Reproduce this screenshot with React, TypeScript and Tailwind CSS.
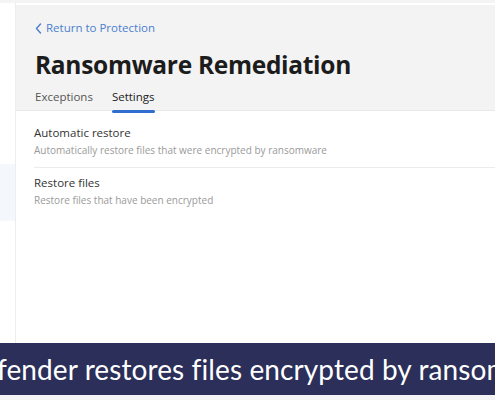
import React from 'react';

const font = { fontFamily: '"Open Sans", "Noto Sans", sans-serif' };

function SettingRow({ title, desc, className }: { title: string; desc: string; className: string }) {
  return (
    <div className={className}>
      <div className="text-[11.5px] leading-[16px] text-[#333]">{title}</div>
      <div className="mt-[2px] text-[10px] leading-[14px] text-[#9a9a9a]">{desc}</div>
    </div>
  );
}

export default function App() {
  return (
    <div className="w-[495px] h-[400px] bg-white overflow-hidden flex flex-col" style={font}>
      <div className="h-[343px] flex border-t-[3px] border-[#f4f4f4]">
        {/* left rail */}
        <div className="w-[16px] shrink-0 border-r border-[#ededed] flex flex-col">
          <div className="h-[161px]" />
          <div className="h-[57px] bg-[#f4f7fc]" />
        </div>

        <div className="flex-1 flex flex-col pt-[2px]">
          {/* header */}
          <div className="bg-[#f3f3f3] border-b border-[#e8e8e8] pl-[19px] pt-[14px] h-[106px]">
            <div className="flex items-center gap-[4px] text-[11.5px] leading-[18px] text-[#4b7fcf]">
              <svg width="7" height="11" viewBox="0 0 7 11" fill="none">
                <path d="M5.5 1 1.5 5.5l4 4.5" stroke="#4b7fcf" strokeWidth="1.4" strokeLinecap="round" strokeLinejoin="round" />
              </svg>
              <span>Return to Protection</span>
            </div>
            <div className="mt-[13px] text-[24.5px] leading-[30px] font-bold text-[#1c1c1c] tracking-[-0.3px]">
              Ransomware Remediation
            </div>
            <div className="mt-[9px] flex gap-[19px] text-[11.5px] leading-[16px]">
              <span className="text-[#555]">Exceptions</span>
              <div className="flex flex-col items-center">
                <span className="text-[#222]">Settings</span>
                <div className="mt-[5px] h-[3px] w-full rounded-full bg-[#2f6ecf]" />
              </div>
            </div>
          </div>

          {/* settings */}
          <div className="pl-[18px]">
            <SettingRow
              className="pt-[14px] pb-[10px] border-b border-[#ececec]"
              title="Automatic restore"
              desc="Automatically restore files that were encrypted by ransomware"
            />
            <SettingRow className="pt-[7px]" title="Restore files" desc="Restore files that have been encrypted" />
          </div>
        </div>
      </div>

      {/* caption band */}
      <div className="h-[52px] bg-[#2b2f59] flex items-center overflow-hidden">
        <span
          className="whitespace-nowrap -ml-[39px] text-[28px] tracking-[0.1px] text-white"
          style={{ fontFamily: 'Lato, "Noto Sans", sans-serif' }}
        >
          Defender restores files encrypted by ransomware
        </span>
      </div>
      <div className="flex-1 bg-[#f4f4f6]" />
    </div>
  );
}
